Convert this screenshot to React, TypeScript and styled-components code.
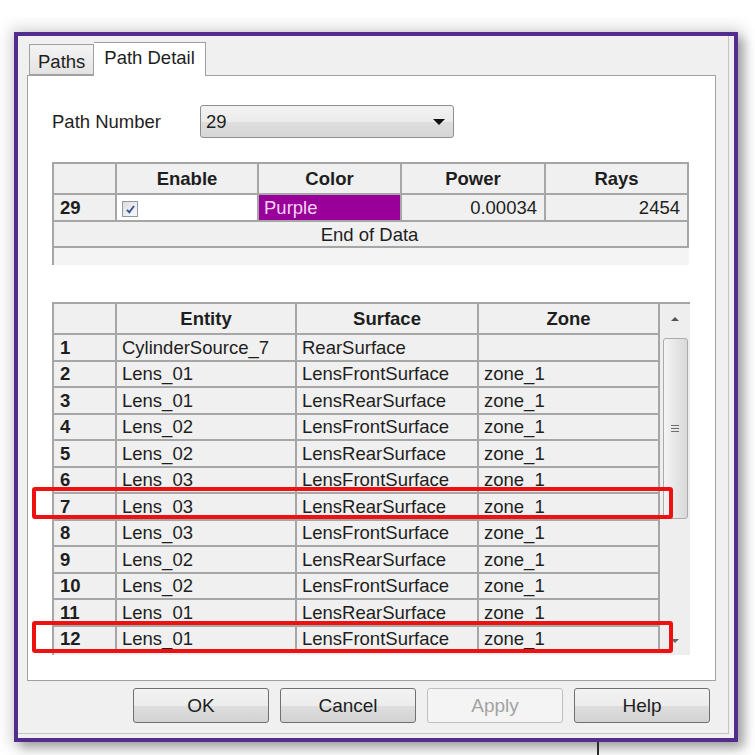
import React from 'react';
import styled, { createGlobalStyle } from 'styled-components';

const GlobalStyle = createGlobalStyle`
  html, body {
    margin: 0;
    padding: 0;
    background: #fff;
  }
  body {
    font-family: 'Liberation Sans', Arial, sans-serif;
    color: #1e1e1e;
  }
`;

const pathRows = [
  { n: 1, entity: 'CylinderSource_7', surface: 'RearSurface', zone: '' },
  { n: 2, entity: 'Lens_01', surface: 'LensFrontSurface', zone: 'zone_1' },
  { n: 3, entity: 'Lens_01', surface: 'LensRearSurface', zone: 'zone_1' },
  { n: 4, entity: 'Lens_02', surface: 'LensFrontSurface', zone: 'zone_1' },
  { n: 5, entity: 'Lens_02', surface: 'LensRearSurface', zone: 'zone_1' },
  { n: 6, entity: 'Lens_03', surface: 'LensFrontSurface', zone: 'zone_1' },
  { n: 7, entity: 'Lens_03', surface: 'LensRearSurface', zone: 'zone_1' },
  { n: 8, entity: 'Lens_03', surface: 'LensFrontSurface', zone: 'zone_1' },
  { n: 9, entity: 'Lens_02', surface: 'LensRearSurface', zone: 'zone_1' },
  { n: 10, entity: 'Lens_02', surface: 'LensFrontSurface', zone: 'zone_1' },
  { n: 11, entity: 'Lens_01', surface: 'LensRearSurface', zone: 'zone_1' },
  { n: 12, entity: 'Lens_01', surface: 'LensFrontSurface', zone: 'zone_1' },
];

export default function App() {
  return (
    <>
      <GlobalStyle />
      <Page>
        <Dialog>
          <DialogBody>
            <Tabs>
              <Tab>Paths</Tab>
              <Tab active>Path Detail</Tab>
            </Tabs>

            <Panel>
              <FieldRow>
                <FieldLabel>Path Number</FieldLabel>
                <Combo>
                  <span>29</span>
                  <DownArrow big />
                </Combo>
              </FieldRow>

              <SummaryFrame>
                <Grid>
                  <colgroup>
                    <col style={{ width: 63 }} />
                    <col style={{ width: 142 }} />
                    <col style={{ width: 143 }} />
                    <col style={{ width: 144 }} />
                    <col />
                  </colgroup>
                  <thead>
                    <HeadRow>
                      <HeadCell />
                      <HeadCell>Enable</HeadCell>
                      <HeadCell>Color</HeadCell>
                      <HeadCell>Power</HeadCell>
                      <HeadCell>Rays</HeadCell>
                    </HeadRow>
                  </thead>
                  <tbody>
                    <DataRow h={27}>
                      <NumCell>29</NumCell>
                      <Cell tone="white">
                        <CheckBox>
                          <svg width="11" height="11" viewBox="0 0 11 11">
                            <path d="M2 5.8 L4.3 8.3 L9 2" fill="none" stroke="#2f4f9a" strokeWidth="1.8" />
                          </svg>
                        </CheckBox>
                      </Cell>
                      <Cell tone="purple">Purple</Cell>
                      <Cell align="right">0.00034</Cell>
                      <Cell align="right">2454</Cell>
                    </DataRow>
                    <DataRow h={26}>
                      <Cell colSpan={5} align="center">End of Data</Cell>
                    </DataRow>
                  </tbody>
                </Grid>
              </SummaryFrame>

              <DetailFrame>
                <DetailGridWrap>
                  <Grid>
                    <colgroup>
                      <col style={{ width: 63 }} />
                      <col style={{ width: 180 }} />
                      <col style={{ width: 182 }} />
                      <col />
                    </colgroup>
                    <thead>
                      <HeadRow>
                        <HeadCell />
                        <HeadCell>Entity</HeadCell>
                        <HeadCell>Surface</HeadCell>
                        <HeadCell>Zone</HeadCell>
                      </HeadRow>
                    </thead>
                    <tbody>
                      {pathRows.map((r) => (
                        <DataRow key={r.n} h={26.5}>
                          <NumCell>{r.n}</NumCell>
                          <Cell>{r.entity}</Cell>
                          <Cell>{r.surface}</Cell>
                          <Cell>{r.zone}</Cell>
                        </DataRow>
                      ))}
                    </tbody>
                  </Grid>
                </DetailGridWrap>
                <ScrollBar>
                  <ScrollButton>
                    <UpArrow />
                  </ScrollButton>
                  <Thumb>
                    <Grip />
                    <Grip />
                    <Grip />
                  </Thumb>
                  <ScrollSpacer />
                  <ScrollButton>
                    <DownArrow />
                  </ScrollButton>
                </ScrollBar>
              </DetailFrame>

              <Highlight top={411} />
              <Highlight top={545} />
            </Panel>

            <ButtonRow>
              <Button>OK</Button>
              <Button>Cancel</Button>
              <Button disabled>Apply</Button>
              <Button>Help</Button>
            </ButtonRow>
          </DialogBody>
        </Dialog>
        <BehindLine />
      </Page>
    </>
  );
}

const Page = styled.div`
  width: 755px;
  height: 755px;
  overflow: hidden;
  box-sizing: border-box;
  padding: 32px 0 0 14px;
  background: #fff;
`;

const Dialog = styled.div`
  width: 724px;
  height: 710px;
  box-sizing: border-box;
  border: 4px solid #532d8e;
  background: #f0f0f0;
  box-shadow: 0 0 14px 4px rgba(0, 0, 0, 0.16), 6px 6px 10px rgba(0, 0, 0, 0.28);
  padding: 0 5px 4px 0;
  display: flex;
`;

const DialogBody = styled.div`
  flex: 1;
  display: flex;
  flex-direction: column;
  padding: 6px 12px 0 9px;
  border-right: 1px solid #c4c4c4;
  border-bottom: 1px solid #c4c4c4;
`;

const Tabs = styled.div`
  display: flex;
  align-items: flex-end;
  height: 33px;
  padding-left: 2px;
  position: relative;
  z-index: 1;
`;

const Tab = styled.div<{ active?: boolean }>`
  box-sizing: border-box;
  height: ${({ active }) => (active ? '34px' : '31px')};
  margin-bottom: ${({ active }) => (active ? '-1px' : '0')};
  padding: ${({ active }) => (active ? '3px 10px 0 10px' : '5px 8px 0 8px')};
  border: 1px solid #a0a0a0;
  border-bottom: ${({ active }) => (active ? 'none' : '1px solid #a0a0a0')};
  border-left: ${({ active }) => (active ? 'none' : '1px solid #a0a0a0')};
  background: ${({ active }) => (active ? '#fff' : 'linear-gradient(#f4f4f4, #e3e3e3)')};
  font-size: 18.5px;
  line-height: 24px;
  color: #1e1e1e;
`;

const Panel = styled.div`
  position: relative;
  height: 606px;
  box-sizing: border-box;
  background: #fff;
  border: 1px solid #a0a0a0;
  padding: 29px 0 0 24px;
`;

const FieldRow = styled.div`
  display: flex;
  align-items: center;
  height: 33px;
`;

const FieldLabel = styled.div`
  width: 148px;
  font-size: 18.5px;
`;

const Combo = styled.div`
  box-sizing: border-box;
  width: 254px;
  height: 33px;
  display: flex;
  align-items: center;
  justify-content: space-between;
  padding: 0 8px 0 5px;
  border: 1px solid #8e8e8e;
  border-radius: 3px;
  background: linear-gradient(#f3f3f3 0%, #ebebeb 50%, #dedede 51%, #d6d6d6 100%);
  font-size: 18.5px;
`;

const DownArrow = styled.span<{ big?: boolean }>`
  width: 0;
  height: 0;
  border-left: ${({ big }) => (big ? '6px' : '4px')} solid transparent;
  border-right: ${({ big }) => (big ? '6px' : '4px')} solid transparent;
  border-top: ${({ big }) => (big ? '6px solid #111' : '4px solid #666')};
`;

const UpArrow = styled.span`
  width: 0;
  height: 0;
  border-left: 4px solid transparent;
  border-right: 4px solid transparent;
  border-bottom: 4px solid #555;
`;

const SummaryFrame = styled.div`
  margin-top: 24px;
  width: 637px;
  height: 103px;
  background: #f4f4f4;
  box-shadow: inset 2px 0 #a6a6a6;
`;

const Grid = styled.table`
  width: 100%;
  border-collapse: collapse;
  table-layout: fixed;
  font-size: 18.5px;
`;

const HeadRow = styled.tr`
  height: 31px;
`;

const HeadCell = styled.th`
  border: 2px solid #a6a6a6;
  background: #f0f0f0;
  font-weight: bold;
  text-align: center;
  padding: 0;
  color: #1e1e1e;
`;

const DataRow = styled.tr<{ h: number }>`
  height: ${({ h }) => h}px;
`;

const Cell = styled.td<{ tone?: 'white' | 'purple'; align?: 'left' | 'right' | 'center' }>`
  border: 2px solid #a6a6a6;
  padding: 1px 7px 0 5px;
  text-align: ${({ align }) => align || 'left'};
  white-space: nowrap;
  overflow: hidden;
  line-height: 20px;
  background: ${({ tone }) => (tone === 'white' ? '#fff' : tone === 'purple' ? '#990099' : '#f0f0f0')};
  color: ${({ tone }) => (tone === 'purple' ? '#f3d6f3' : '#1e1e1e')};
`;

const NumCell = styled.td`
  border: 2px solid #a6a6a6;
  padding: 1px 0 0 6px;
  background: #f0f0f0;
  font-weight: bold;
  line-height: 20px;
`;

const CheckBox = styled.span`
  box-sizing: border-box;
  display: flex;
  align-items: center;
  justify-content: center;
  width: 16px;
  height: 16px;
  margin-top: 2px;
  border: 1px solid #8e9aab;
  background: linear-gradient(135deg, #dcdcdc, #fafafa);
`;

const DetailFrame = styled.div`
  margin-top: 37px;
  width: 638px;
  height: 353px;
  display: flex;
  overflow: hidden;
  background: #f0f0f0;
  box-shadow: inset 2px 0 #a6a6a6;
`;

const DetailGridWrap = styled.div`
  width: 608px;
  flex: none;
`;

const ScrollBar = styled.div`
  width: 30px;
  flex: none;
  box-sizing: border-box;
  display: flex;
  flex-direction: column;
  align-items: center;
  border-top: 2px solid #a6a6a6;
  background: #eeeeee;
`;

const ScrollButton = styled.div`
  height: 29px;
  width: 100%;
  display: flex;
  align-items: center;
  justify-content: center;
`;

const Thumb = styled.div`
  box-sizing: border-box;
  margin-top: 5px;
  width: 25px;
  height: 181px;
  border: 1px solid #ababab;
  border-radius: 3px;
  background: linear-gradient(90deg, #f5f5f5, #e6e6e6 50%, #d9d9d9);
  display: flex;
  flex-direction: column;
  align-items: center;
  justify-content: center;
  gap: 2px;
`;

const Grip = styled.span`
  width: 8px;
  height: 1px;
  background: #6e6e6e;
`;

const ScrollSpacer = styled.div`
  flex: 1;
`;

const Highlight = styled.div<{ top: number }>`
  position: absolute;
  left: 4px;
  top: ${({ top }) => top}px;
  width: 641px;
  height: 32px;
  box-sizing: border-box;
  border: 4px solid #ee1111;
  border-radius: 3px;
  pointer-events: none;
`;

const ButtonRow = styled.div`
  margin-top: 7px;
  display: flex;
  justify-content: flex-end;
  gap: 11px;
  padding-right: 6px;
`;

const Button = styled.button`
  width: 136px;
  height: 35px;
  border-radius: 3px;
  border: 1px solid #707070;
  background: linear-gradient(#f3f3f3 0%, #ececec 50%, #dedede 51%, #d2d2d2 100%);
  color: #1e1e1e;
  font-family: 'Liberation Sans', Arial, sans-serif;
  font-size: 19px;
  padding: 0;

  &:disabled {
    border-color: #bfbfbf;
    background: #f4f4f4;
    color: #a3a3a3;
  }
`;

const BehindLine = styled.div`
  margin-left: 583px;
  width: 0;
  height: 13px;
  border-left: 2px solid #2a2a2a;
`;
